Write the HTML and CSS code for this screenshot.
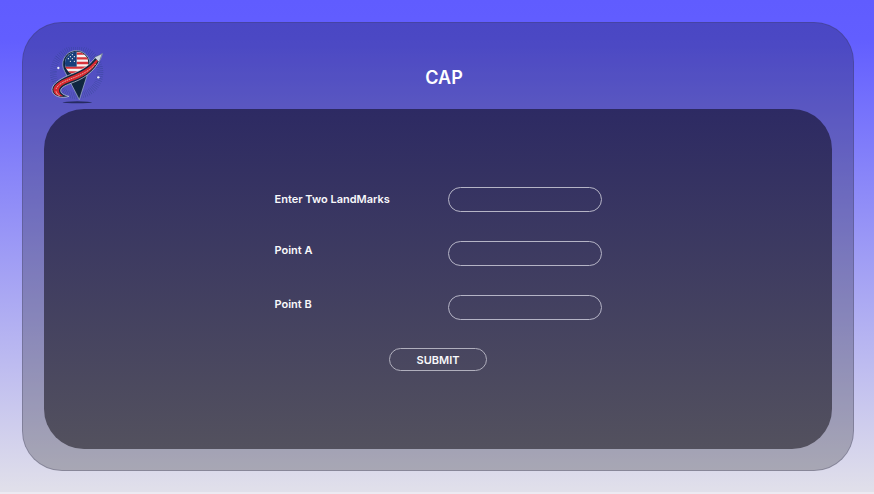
FILE: index.html
```html
<!DOCTYPE html>
<html lang="en">
<head>
  <meta charset="UTF-8" />
  <meta name="viewport" content="width=device-width, initial-scale=1.0" />
  <title>CAP</title>
  <link rel="stylesheet" href="styles.css">
</head>
<body>
  <main class="shell">
    <header class="top">
      <svg class="logo" viewBox="15 9 168 180" width="56" height="60" role="img" aria-label="CAP logo">
        <defs>
          <clipPath id="flagClip"><circle cx="95" cy="58" r="35" /></clipPath>
        </defs>
        <ellipse cx="97" cy="175" rx="44" ry="3" fill="#1d2350" opacity="0.85" />
        <circle cx="95" cy="85" r="70" fill="none" stroke="#25407a" stroke-width="20" stroke-dasharray="1 5" opacity="0.6" />
        <circle cx="40" cy="72" r="3.500" fill="#eef1fa" />
        <circle cx="160" cy="100" r="3.500" fill="#eef1fa" />
        <path d="M103 167 L59 82 A41 41 0 1 1 134 70 Z" fill="#10263f" stroke="#aebdd0" stroke-width="2" stroke-linejoin="round" />
        <g clip-path="url(#flagClip)">
          <rect x="60" y="22" width="70" height="72" fill="#f4f1f1" />
          <path d="M95 29 H130 M95 43 H130 M95 57 H130 M60 71 H130 M60 85 H130" stroke="#d5323a" stroke-width="7" />
          <rect x="60" y="22" width="35" height="46" fill="#173f7c" />
          <path d="M70 32 h.1 M82 32 h.1 M70 44 h.1 M82 44 h.1 M76 38 h.1 M88 38 h.1 M76 52 h.1 M88 52 h.1" stroke="#fff" stroke-width="3.500" stroke-linecap="round" />
        </g>
        <path d="M172 29 C160 72 125 100 88 114 C64 123 46 130 47 140 C48 150 60 154 72 157 C50 165 20 157 21 136 C22 118 50 102 80 90 C105 80 130 68 148 44 Z" fill="#10263f" stroke="#d3dbe5" stroke-width="2" stroke-linejoin="round" />
        <path d="M165 38 C152 72 122 96 87 109 C62 118 42 126 42 140 C42 148 48 153 56 157 C36 158 25 150 25 136 C26 120 52 106 82 95 C106 85 134 72 151 50 Z" fill="#d4282f" />
        <path d="M152 60 C134 80 110 92 84 102 C62 110 38 120 33 136" fill="none" stroke="#f6e9e4" stroke-width="2" stroke-dasharray="4 2" />
        <path d="M33 142 C34 148 38 152 44 155" fill="none" stroke="#f6e9e4" stroke-width="2" />
        <path d="M172 29 L148 40 L162 54 Z" fill="#c9d2de" stroke="#10263f" stroke-width="1" />
      </svg>
      <h1 class="title">CAP</h1>
    </header>
    <section class="panel">
      <form class="form">
        <div class="fields">
          <label class="field-label field-label--first" for="landmarks">Enter Two LandMarks</label>
          <input class="field-input" type="text" id="landmarks" name="landmarks" />

          <label class="field-label" for="pointA">Point A</label>
          <input class="field-input" type="text" id="pointA" name="pointA" />

          <label class="field-label" for="pointB">Point B</label>
          <input class="field-input" type="text" id="pointB" name="pointB" />
        </div>
        <button class="submit" type="button">SUBMIT</button>
      </form>
    </section>
  </main>
</body>
</html>
```

FILE: styles.css
```css
html {
  background: #eceaf2;
}

body {
  margin: 0;
  height: 492px;
  overflow: hidden;
  box-sizing: border-box;
  padding: 22px 20px 21px 22px;
  font-family: 'Inter', 'Lato', sans-serif;
  background: linear-gradient(180deg, #605cff 0%, #625eff 8%, #e1e0ea 100%);
}

.shell {
  box-sizing: border-box;
  height: 449px;
  display: flex;
  flex-direction: column;
  border: 1px solid rgba(60, 60, 90, 0.3);
  border-radius: 40px;
  background: rgba(0, 0, 0, 0.23);
}

.top {
  height: 86px;
  flex: none;
  display: flex;
  align-items: center;
  padding: 0 71px 0 27px;
}

.logo {
  flex: none;
  margin-top: 22px;
}

.title {
  flex: 1;
  margin: 22px 0 0;
  text-align: center;
  color: #fff;
  font-size: 18px;
  font-weight: 600;
}

.panel {
  height: 340px;
  margin: 0 21px;
  flex: none;
  border-radius: 40px;
  background: linear-gradient(180deg, #2d2a63 0%, #53515e 100%);
}

.form {
  width: 327px;
  margin: 0 auto;
  padding-top: 78px;
  display: flex;
  flex-direction: column;
}

.fields {
  display: grid;
  grid-template-columns: 173px 154px;
  row-gap: 29px;
}

.field-label {
  color: #f8f8fb;
  font-size: 11px;
  font-weight: 600;
  line-height: 19px;
}

.field-label--first {
  align-self: center;
}

.field-input {
  box-sizing: border-box;
  width: 154px;
  height: 25px;
  padding: 0 10px;
  border: 1px solid #b5b4c6;
  border-radius: 13px;
  background: transparent;
  color: #fff;
}

.submit {
  box-sizing: border-box;
  align-self: center;
  width: 98px;
  height: 23px;
  margin-top: 28px;
  padding: 0;
  border: 1px solid #b0afbd;
  border-radius: 12px;
  background: transparent;
  color: #f8f8fb;
  font-family: inherit;
  font-size: 11px;
  font-weight: 600;
}
```
